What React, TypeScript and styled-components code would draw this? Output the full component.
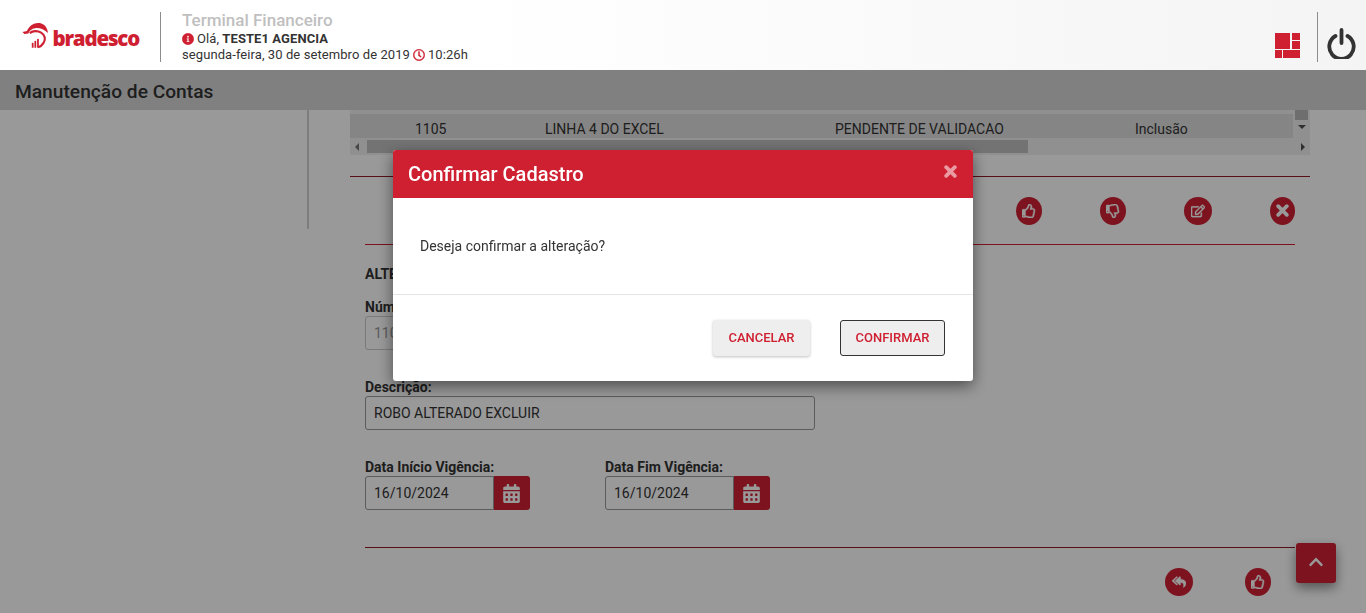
import React from 'react';
import styled, { createGlobalStyle } from 'styled-components';
import {
  FaCalendarAlt,
  FaChevronUp,
  FaInfoCircle,
  FaRegClock,
  FaRegEdit,
  FaRegThumbsDown,
  FaRegThumbsUp,
  FaReplyAll,
} from 'react-icons/fa';

const RED = '#cf2032';
const DARK_RED = '#8f1a26';

const GlobalStyle = createGlobalStyle`
  html, body { margin: 0; padding: 0; height: 100%; overflow: hidden; background: #fff; }
  body { font-family: Roboto, "Liberation Sans", sans-serif; color: #333; }
  * { box-sizing: border-box; }
`;

const Header = styled.header`
  position: relative;
  z-index: 20;
  height: 70px;
  display: flex;
  align-items: center;
  background: linear-gradient(90deg, #fff 0%, #fff 35%, #f4f4f4 100%);
  padding: 4px 10px 0 22px;
`;

const Logo = styled.div`
  width: 117px;
  display: flex;
  align-items: center;
  gap: 4px;
  margin-top: -4px;
  color: ${RED};
  font-family: "Open Sans", sans-serif;
  font-weight: 800;
  font-size: 20.5px;
  letter-spacing: -1.2px;
  line-height: 1;
`;

const LogoText = styled.span`
  margin-top: 6px;
`;

const HeaderRule = styled.div`
  width: 1px;
  height: 50px;
  background: #8c8c8c;
  margin: 0 21px;
`;

const Info = styled.div`
  flex: 1;
  display: flex;
  flex-direction: column;
  font-size: 13px;
  line-height: 16px;
  letter-spacing: 0.08px;
  color: #333;
`;

const SystemName = styled.div`
  height: 20px;
  font-size: 17px;
  font-weight: 500;
  line-height: 18px;
  letter-spacing: 0;
  color: #bfbfbf;
`;

const InfoLine = styled.div`
  display: flex;
  align-items: center;
  gap: 3px;
  height: 16px;
  svg { color: ${RED}; font-size: 12px; }
  svg path { stroke: currentColor; stroke-width: 12px; }
  b { font-weight: 700; }
`;

const HeaderTools = styled.div`
  display: flex;
  align-items: center;
  height: 50px;
`;

const ToolGrid = styled.svg`
  width: 25px;
  height: 25px;
  margin-top: 17px;
`;

const ToolRule = styled.div`
  width: 1px;
  height: 50px;
  background: #8c8c8c;
  margin: 0 9px 0 17px;
`;

const PowerIcon = styled.svg`
  width: 29px;
  height: 31px;
  margin-top: 12px;
`;

const TitleBar = styled.div`
  height: 40px;
  display: flex;
  align-items: center;
  padding: 2px 0 0 15px;
  background: #d6d6d6;
  font-size: 19.2px;
  font-weight: 500;
  color: #333;
`;

const Main = styled.main`
  display: flex;
  align-items: flex-start;
`;

const Sidebar = styled.aside`
  width: 309px;
  height: 119px;
  border-right: 2px solid #d0d0d0;
  flex: none;
`;

const Content = styled.section`
  width: 960px;
  margin-left: 41px;
  flex: none;
`;

const TableBox = styled.div`
  position: relative;
  height: 45px;
  padding-top: 4px;
  background: #f1f1f1;
  display: flex;
  flex-direction: column;
`;

const TableRow = styled.div`
  width: 943px;
  height: 24px;
  flex: none;
  display: grid;
  grid-template-columns: 195px 290px 300px 1fr;
  align-items: center;
  background: #dedede;
  font-size: 14px;
  color: #333;
  padding-top: 6px;
`;

const Cell = styled.div<{ $indent?: number }>`
  padding-left: ${p => p.$indent ?? 0}px;
`;

const ScrollX = styled.div`
  position: relative;
  height: 17px;
  display: flex;
  align-items: center;
  padding: 0 17px;
`;

const ScrollThumb = styled.div`
  width: 661px;
  height: 13px;
  background: #c0c0c0;
`;

const ScrollY = styled.div`
  position: absolute;
  right: 0;
  top: 0;
  width: 17px;
  height: 28px;
  display: flex;
  flex-direction: column;
  align-items: center;
`;

const ScrollYThumb = styled.div`
  width: 13px;
  height: 10px;
  background: #b8b8b8;
`;

const Arrow = styled.i<{ $dir: 'left' | 'right' | 'down' }>`
  width: 0;
  height: 0;
  display: block;
  border-style: solid;
  ${p => p.$dir === 'left' && `border-width: 4px 4px 4px 0; border-color: transparent #777 transparent transparent; position: absolute; left: 5px;`}
  ${p => p.$dir === 'right' && `border-width: 4px 0 4px 4px; border-color: transparent transparent transparent #505050; position: absolute; right: 5px;`}
  ${p => p.$dir === 'down' && `border-width: 4px 4px 0 4px; border-color: #505050 transparent transparent transparent; margin-top: 5px;`}
`;

const TopRule = styled.hr`
  height: 1px;
  border: 0;
  margin: 21px 0 0;
  background: ${DARK_RED};
`;

const ActionRow = styled.div`
  height: 67px;
  display: flex;
  justify-content: flex-end;
  align-items: center;
  gap: 58px;
  padding-right: 15px;
`;

const RoundButton = styled.button<{ $w: number }>`
  width: ${p => p.$w}px;
  height: 28px;
  padding: 0;
  border: 0;
  border-radius: 50%;
  flex: none;
  display: flex;
  align-items: center;
  justify-content: center;
  background: ${RED};
  color: #fff;
  font-size: 14px;
  svg[fill='currentColor'] path { stroke: currentColor; stroke-width: 14px; }
`;

const Form = styled.div`
  padding: 0 15px;
`;

const RedRule = styled.hr`
  height: 1px;
  border: 0;
  margin: 0;
  background: ${RED};
`;

const SectionTitle = styled.div`
  margin-top: 21px;
  height: 16px;
  font-size: 14px;
  line-height: 16px;
  font-weight: 700;
  color: #333;
`;

const Field = styled.div<{ $width: number; $top: number }>`
  width: ${p => p.$width}px;
  margin-top: ${p => p.$top}px;
`;

const FieldLabel = styled.label`
  display: block;
  height: 18px;
  font-size: 14px;
  line-height: 18px;
  font-weight: 700;
  color: #333;
`;

const Input = styled.div<{ $muted?: boolean }>`
  height: 34px;
  display: flex;
  align-items: center;
  padding-left: 8px;
  border: 1px solid ${p => (p.$muted ? '#ccc' : '#999')};
  border-radius: 3px;
  background: #fff;
  font-size: 14px;
  color: ${p => (p.$muted ? '#999' : '#333')};
`;

const DateRow = styled.div`
  display: flex;
  gap: 75px;
  margin-top: 28px;
`;

const DateField = styled.div`
  width: 165px;
`;

const DateControl = styled.div`
  display: flex;
  height: 34px;
`;

const DateInput = styled(Input)`
  flex: 1;
  border-radius: 3px 0 0 3px;
`;

const DateAddon = styled.div`
  width: 36px;
  flex: none;
  display: flex;
  align-items: center;
  justify-content: center;
  padding-right: 1px;
  background: ${RED};
  border-radius: 0 3px 3px 0;
  color: #fff;
  font-size: 19px;
`;

const BottomRule = styled.hr`
  height: 1px;
  border: 0;
  margin: 37px 0 0;
  background: ${DARK_RED};
`;

const BottomActions = styled.div`
  height: 68px;
  display: flex;
  justify-content: flex-end;
  align-items: center;
  gap: 52px;
  padding-right: 24px;
`;

const BackToTop = styled.button`
  position: fixed;
  left: 1296px;
  top: 543px;
  width: 40px;
  height: 40px;
  padding: 0 0 2px;
  border: 0;
  border-radius: 3px;
  display: flex;
  align-items: center;
  justify-content: center;
  background: ${RED};
  color: #fff;
  font-size: 16px;
  box-shadow: 0 5px 12px rgba(0, 0, 0, 0.45);
`;

const Overlay = styled.div`
  position: fixed;
  inset: 70px 0 0 0;
  z-index: 10;
  display: flex;
  justify-content: center;
  align-items: flex-start;
  background: rgba(0, 0, 0, 0.4);
`;

const Modal = styled.div`
  width: 580px;
  margin-top: 80px;
  border-radius: 3px;
  background: #fff;
  box-shadow: 0 5px 15px rgba(0, 0, 0, 0.5);
  overflow: hidden;
`;

const ModalHeader = styled.div`
  height: 48px;
  display: flex;
  align-items: center;
  justify-content: space-between;
  padding: 0 15px;
  background: ${RED};
  color: #fff;
  font-size: 20px;
  font-weight: 500;
`;

const CloseIcon = styled.span`
  display: flex;
  margin: -6px 1px 0 0;
  opacity: 0.55;
`;

const ModalBody = styled.div`
  height: 97px;
  display: flex;
  align-items: center;
  padding: 0 27px 1px;
  font-size: 14px;
  color: #333;
  border-bottom: 1px solid #e5e5e5;
`;

const ModalFooter = styled.div`
  height: 86px;
  display: flex;
  justify-content: flex-end;
  gap: 30px;
  padding: 25px 28px 0 0;
`;

const FlatButton = styled.button<{ $focused?: boolean }>`
  height: 36px;
  padding: 0 14.5px 2px;
  border: 1px solid ${p => (p.$focused ? '#333' : '#eee')};
  border-radius: 3px;
  background: #eee;
  color: ${RED};
  font-family: Roboto, sans-serif;
  font-size: 13px;
  font-weight: 500;
  box-shadow: ${p => (p.$focused ? 'none' : '0 1px 3px rgba(0, 0, 0, 0.25)')};
`;

function BradescoMark() {
  return (
    <svg width="27" height="27" viewBox="0 0 27 27" fill="none" aria-hidden>
      <path d="M0.5 10 L5 9 C7.5 3 13 0 18 0.8 C23 1.6 26 5.5 26.5 11 C23 7.5 18 5.5 13.5 6 C10 6.4 7.5 8.5 6.5 11.5 L2.5 12 Z" fill={RED} />
      <path d="M8 11 C11 8.5 16 8.5 19.5 10.5 C23.5 13 24.5 17.5 22 21 C20.5 23.5 18.5 25 16.5 25.5" stroke={RED} strokeWidth="2.2" />
      <rect x="10" y="21" width="1.8" height="5" fill={RED} />
      <rect x="12.7" y="19" width="1.8" height="7" fill={RED} />
      <rect x="15.4" y="17" width="1.8" height="9" fill={RED} />
    </svg>
  );
}

function ChunkyX({ size, color }: { size: number; color: string }) {
  return (
    <svg width={size} height={size} viewBox="0 0 12 12" aria-hidden>
      <path d="M2 2 L10 10 M10 2 L2 10" stroke={color} strokeWidth="3.4" strokeLinecap="round" />
    </svg>
  );
}

export default function App() {
  return (
    <>
      <GlobalStyle />
      <Header>
        <Logo>
          <BradescoMark />
          <LogoText>bradesco</LogoText>
        </Logo>
        <HeaderRule />
        <Info>
          <SystemName>Terminal Financeiro</SystemName>
          <InfoLine>
            <FaInfoCircle />
            <span>Olá, <b>TESTE1 AGENCIA</b></span>
          </InfoLine>
          <InfoLine>
            <span>segunda-feira, 30 de setembro de 2019</span>
            <FaRegClock />
            <span>10:26h</span>
          </InfoLine>
        </Info>
        <HeaderTools>
          <ToolGrid viewBox="0 0 25 25" aria-hidden>
            <rect x="0" y="0" width="15" height="16" fill={RED} />
            <rect x="17" y="0" width="8" height="7" fill={RED} />
            <rect x="17" y="8" width="8" height="8" fill={RED} />
            <rect x="0" y="17" width="7" height="8" fill={RED} />
            <rect x="8" y="17" width="17" height="8" fill={RED} />
          </ToolGrid>
          <ToolRule />
          <PowerIcon viewBox="0 0 29 31" fill="none" aria-hidden>
            <path d="M8.5 8 A12.2 12.2 0 1 0 20.5 8" stroke="#333" strokeWidth="3.8" strokeLinecap="round" />
            <path d="M14.5 2 V15" stroke="#333" strokeWidth="3.8" strokeLinecap="round" />
          </PowerIcon>
        </HeaderTools>
      </Header>

      <TitleBar>Manutenção de Contas</TitleBar>

      <Main>
        <Sidebar />
        <Content>
          <TableBox>
            <TableRow>
              <Cell $indent={65}>1105</Cell>
              <Cell>LINHA 4 DO EXCEL</Cell>
              <Cell>PENDENTE DE VALIDACAO</Cell>
              <Cell>Inclusão</Cell>
            </TableRow>
            <ScrollX>
              <Arrow $dir="left" />
              <ScrollThumb />
              <Arrow $dir="right" />
            </ScrollX>
            <ScrollY>
              <ScrollYThumb />
              <Arrow $dir="down" />
            </ScrollY>
          </TableBox>

          <TopRule />
          <ActionRow>
            <RoundButton $w={26}><FaRegThumbsUp /></RoundButton>
            <RoundButton $w={26}><FaRegThumbsDown /></RoundButton>
            <RoundButton $w={28}><FaRegEdit /></RoundButton>
            <RoundButton $w={25}><ChunkyX size={13} color="#fff" /></RoundButton>
          </ActionRow>

          <Form>
            <RedRule />
            <SectionTitle>ALTERAR CONTA</SectionTitle>
            <Field $width={450} $top={16}>
              <FieldLabel>Número:</FieldLabel>
              <Input $muted>1105</Input>
            </Field>
            <Field $width={450} $top={28}>
              <FieldLabel>Descrição:</FieldLabel>
              <Input>ROBO ALTERADO EXCLUIR</Input>
            </Field>
            <DateRow>
              <DateField>
                <FieldLabel>Data Início Vigência:</FieldLabel>
                <DateControl>
                  <DateInput>16/10/2024</DateInput>
                  <DateAddon><FaCalendarAlt /></DateAddon>
                </DateControl>
              </DateField>
              <DateField>
                <FieldLabel>Data Fim Vigência:</FieldLabel>
                <DateControl>
                  <DateInput>16/10/2024</DateInput>
                  <DateAddon><FaCalendarAlt /></DateAddon>
                </DateControl>
              </DateField>
            </DateRow>
            <BottomRule />
            <BottomActions>
              <RoundButton $w={28}><FaReplyAll /></RoundButton>
              <RoundButton $w={26}><FaRegThumbsUp /></RoundButton>
            </BottomActions>
          </Form>
        </Content>
      </Main>

      <BackToTop><FaChevronUp /></BackToTop>

      <Overlay>
        <Modal>
          <ModalHeader>
            <span>Confirmar Cadastro</span>
            <CloseIcon><ChunkyX size={13} color="#fff" /></CloseIcon>
          </ModalHeader>
          <ModalBody>Deseja confirmar a alteração?</ModalBody>
          <ModalFooter>
            <FlatButton>CANCELAR</FlatButton>
            <FlatButton $focused>CONFIRMAR</FlatButton>
          </ModalFooter>
        </Modal>
      </Overlay>
    </>
  );
}
